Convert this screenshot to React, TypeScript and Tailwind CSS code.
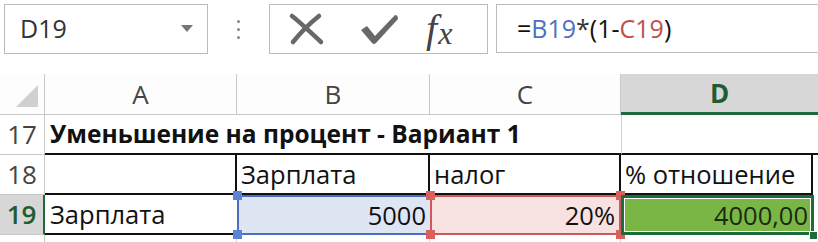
import React from "react";

const cellFont = { fontFamily: '"Open Sans", "Noto Sans", sans-serif' };

function Handle({ className }: { className: string }) {
  return <div className={`absolute w-[9px] h-[9px] ${className}`} />;
}

export default function App() {
  return (
    <div className="w-[818px] h-[242px] overflow-hidden bg-white relative" style={cellFont}>
      {/* Toolbar */}
      <div className="h-[74px] flex items-start pt-[4px] bg-white">
        <div className="ml-[4px] w-[204px] h-[50px] border border-[#bcbcbc] flex items-center justify-between pl-[15px] pr-[14px]">
          <span className="text-[25px] text-[#333]">D19</span>
          <svg width="12" height="8" viewBox="0 0 12 8">
            <path d="M0 0 L12 0 L6 7 Z" fill="#777" />
          </svg>
        </div>
        <div className="w-[61px] h-[50px] flex flex-col items-center justify-center gap-[5px]">
          <div className="w-[3px] h-[3px] rounded-full bg-[#888]" />
          <div className="w-[3px] h-[3px] rounded-full bg-[#888]" />
          <div className="w-[3px] h-[3px] rounded-full bg-[#888]" />
        </div>
        <div className="w-[219px] h-[50px] border border-[#bcbcbc] flex items-center">
          <svg className="ml-[18px]" width="38" height="34" viewBox="0 0 38 34">
            <path d="M4 4 C12 10 22 20 33 30" stroke="#686868" strokeWidth="4.5" fill="none" strokeLinecap="round" />
            <path d="M31 4 C21 12 13 20 5 30" stroke="#686868" strokeWidth="4.5" fill="none" strokeLinecap="round" />
          </svg>
          <svg className="ml-[32px]" width="42" height="34" viewBox="0 0 42 34">
            <path d="M3 18 L9 14 L17 24 L37 3 Q40 3 40 7 L18 31 Q16 33 14 31 Z" fill="#686868" />
          </svg>
          <span
            className="ml-[26px] text-[#444] italic leading-none flex items-end"
            style={{ fontFamily: '"Liberation Serif", "DejaVu Serif", serif' }}
          >
            <span className="text-[40px]">f</span>
            <span className="text-[32px] pl-[1px]">x</span>
          </span>
        </div>
        <div className="ml-[8px] flex-1 h-[49px] border-l border-t border-b border-[#bcbcbc] flex items-center pl-[20px] text-[25px]">
          <span className="text-[#111]">=</span>
          <span className="text-[#4a72c0]">B19</span>
          <span className="text-[#333]">*</span>
          <span className="text-[#111]">(1-</span>
          <span className="text-[#c0504d]">C19</span>
          <span className="text-[#111]">)</span>
        </div>
      </div>

      {/* Grid */}
      <div className="grid grid-cols-[45px_192px_193px_191px_197px] grid-rows-[41px_40px_40px_40px_20px] text-[25.5px] text-[#111]">
        {/* Header row */}
        <div className="border-r border-b border-[#c8c8c8] bg-[#fdfdfd] relative">
          <svg className="absolute left-[16px] top-[11px]" width="22" height="22" viewBox="0 0 22 22">
            <path d="M22 0 L22 22 L0 22 Z" fill="#d0d0d0" />
          </svg>
        </div>
        <div className="border-r border-b border-[#c8c8c8] bg-[#fdfdfd] flex items-center justify-center text-[#444] text-[26px]">A</div>
        <div className="border-r border-b border-[#c8c8c8] bg-[#fdfdfd] flex items-center justify-center text-[#444] text-[26px]">B</div>
        <div className="border-r border-b border-[#c8c8c8] bg-[#fdfdfd] flex items-center justify-center text-[#444] text-[26px]">C</div>
        <div className="border-b-[3px] border-[#1e6b3c] bg-[#d7d7d7] flex items-center justify-center text-[#1e5c32] font-bold text-[26px]">D</div>

        {/* Row 17 */}
        <div className="border-r border-b border-[#c8c8c8] flex items-center justify-center text-[#444] text-[26px]">17</div>
        <div className="col-span-3 border-b-2 border-[#111] flex items-center pl-[5px] font-bold whitespace-nowrap text-[24.5px]">
          Уменьшение на процент - Вариант 1
        </div>
        <div className="border-l border-[#d0d0d0] border-b-2 border-b-[#111]" />

        {/* Row 18 */}
        <div className="border-r border-b border-[#c8c8c8] flex items-center justify-center text-[#444] text-[26px]">18</div>
        <div className="border-r-2 border-b-2 border-[#111]" />
        <div className="border-r-2 border-b-2 border-[#111] flex items-center pl-[4px]">Зарплата</div>
        <div className="border-r-2 border-b-2 border-[#111] flex items-center pl-[4px]">налог</div>
        <div className="w-[192px] border-r-2 border-b-2 border-[#111] flex items-center pl-[4px] whitespace-nowrap">% отношение</div>

        {/* Row 19 */}
        <div className="border-r-2 border-r-[#1e6b3c] border-b border-b-[#c8c8c8] bg-[#d7d7d7] flex items-center justify-center text-[#1e5c32] font-semibold text-[26px]">19</div>
        <div className="border-b-2 border-[#111] flex items-center pl-[5px]">Зарплата</div>
        <div className="relative bg-[#dfe6f3] flex items-center justify-end pr-[4px]">
          <div className="absolute inset-0 border-[2px] border-[#4a6fbf] border-r-0" />
          <Handle className="bg-[#5b84d6] left-[-4px] top-[-4px]" />
          <Handle className="bg-[#5b84d6] left-[-4px] bottom-[-4px]" />
          <span className="relative">5000</span>
        </div>
        <div className="relative bg-[#f8e1e1] flex items-center justify-end pr-[6px]">
          <div className="absolute inset-0 border-[2px] border-[#cc5a5a]" />
          <Handle className="bg-[#d9605e] left-[-4px] top-[-4px]" />
          <Handle className="bg-[#d9605e] left-[-4px] bottom-[-4px]" />
          <Handle className="bg-[#d9605e] right-[-4px] top-[-4px]" />
          <Handle className="bg-[#d9605e] right-[-4px] bottom-[-4px]" />
          <span className="relative">20%</span>
        </div>
        <div className="relative w-[193px] border-[3px] border-[#1e6b3c] bg-white">
          <div className="absolute inset-[1px] bg-[#7ab646] flex items-center justify-end pr-[2px] text-[#1a2a10]">4000,00</div>
          <Handle className="bg-[#1e6b3c] right-[-7px] bottom-[-8px] border border-white" />
        </div>

        {/* Row 20 */}
        <div className="border-r border-[#c8c8c8]" />
        <div className="border-r border-[#d8d8d8]" />
        <div className="border-r border-[#d8d8d8]" />
        <div className="border-r border-[#d8d8d8]" />
        <div />
      </div>
    </div>
  );
}
